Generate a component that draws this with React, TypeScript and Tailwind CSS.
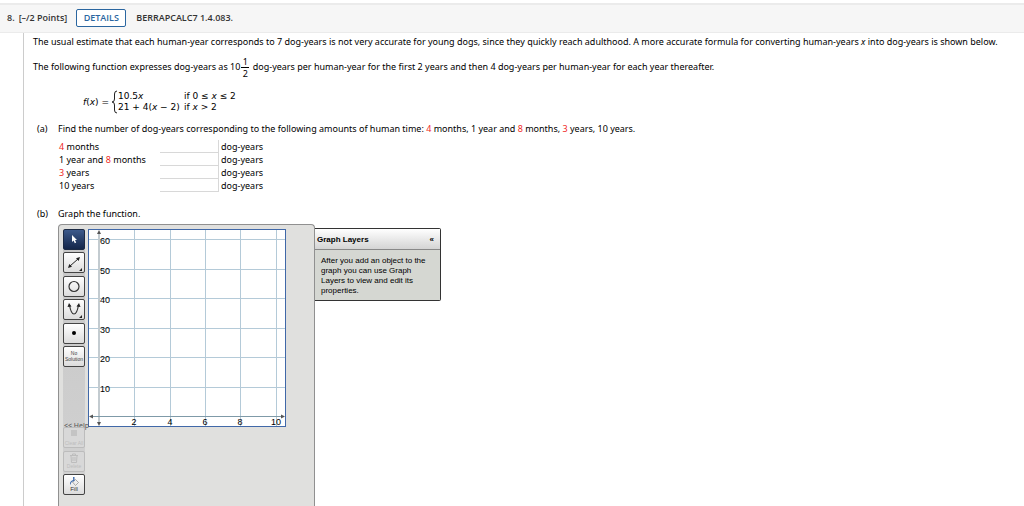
import React from 'react';

const AMOUNTS = [
  { id: 'a', label: <><Red>4</Red> months</> },
  { id: 'b', label: <>1 year and <Red>8</Red> months</> },
  { id: 'c', label: <><Red>3</Red> years</> },
  { id: 'd', label: <>10 years</> },
];

const X_TICKS = [
  { value: 2, x: 46 },
  { value: 4, x: 82 },
  { value: 6, x: 117 },
  { value: 8, x: 152 },
  { value: 10, x: 188 },
];

const Y_TICKS = [
  { value: 60, y: 11 },
  { value: 50, y: 41 },
  { value: 40, y: 70 },
  { value: 30, y: 100 },
  { value: 20, y: 129 },
  { value: 10, y: 159 },
];

function Red({ children }: { children: React.ReactNode }) {
  return <span className="text-[#f0281e]">{children}</span>;
}

function Fraction() {
  return (
    <span className="inline-flex flex-col items-center align-middle leading-[11px] mx-px">
      <span className="w-2 text-center border-b border-black">1</span>
      <span>2</span>
    </span>
  );
}

function ToolButton({ label, active, disabled, children }: {
  label: string;
  active?: boolean;
  disabled?: boolean;
  children: React.ReactNode;
}) {
  const look = active
    ? 'border-[#1c2a44] bg-linear-to-b from-[#3d5a8c] to-[#14264a]'
    : 'border-[#444] bg-linear-to-b from-white to-[#dcdcdc]';
  return (
    <button
      type="button"
      aria-label={label}
      disabled={disabled}
      className={`w-[22px] h-[21px] shrink-0 rounded-xs border flex flex-col items-center justify-center whitespace-nowrap font-['Liberation_Sans',sans-serif] ${disabled ? 'border-[#bcbcbc] bg-[#d8d8d8] text-[#bdbdbd]' : look}`}
    >
      {children}
    </button>
  );
}

function Toolbar() {
  return (
    <div className="w-[22px] flex flex-col bg-linear-to-b from-[#c6c6c6] to-[#d2d2d2]">
      <div className="h-[138px] flex flex-col justify-between">
        <ToolButton label="Select" active>
          <svg width="20" height="19" viewBox="0 0 20 19">
            <path d="M8 5v7l1.600-1.400 1.200 2.600 1.400-.6-1.200-2.500 2-.2z" fill="#fff" />
          </svg>
        </ToolButton>
        <ToolButton label="Line">
          <svg width="20" height="19" viewBox="0 0 20 19">
            <path d="M6 13L14 6" stroke="#222" />
            <path d="M4 15l1.300-4 2.700 2.800zM16 4l-4 1.200 2.700 2.900zM18 15v3h-3z" fill="#222" />
          </svg>
        </ToolButton>
        <ToolButton label="Circle">
          <svg width="20" height="19" viewBox="0 0 20 19">
            <circle cx="10" cy="9.500" r="5" fill="none" stroke="#333" strokeWidth="1.200" />
          </svg>
        </ToolButton>
        <ToolButton label="Parabola">
          <svg width="20" height="19" viewBox="0 0 20 19">
            <path d="M5.500 5C6.500 11 8 14 10 14s3.500-3 4.500-9" fill="none" stroke="#333" strokeWidth="1.200" />
            <path d="M5 3l-1.500 4 4-.5zM15 3l1.500 4-4-.5zM18 15v3h-3z" fill="#222" />
          </svg>
        </ToolButton>
        <ToolButton label="Point">
          <span className="size-1 rounded-full bg-black" />
        </ToolButton>
        <ToolButton label="No Solution">
          <span className="text-[5px] leading-[6px] text-[#444]">No<br />Solution</span>
        </ToolButton>
      </div>
      <a href="#help" className="relative z-10 mt-[54px] h-[6px] pl-px whitespace-nowrap text-[7px] leading-[10px] text-[#555]">&lt;&lt; Help</a>
      <div className="relative z-20 h-[68px] flex flex-col justify-between">
        <ToolButton label="Clear All" disabled>
          <span className="size-[6px] mb-1 bg-[#c4c4c4]" />
          <span className="text-[5px] leading-[6px]">Clear All</span>
        </ToolButton>
        <ToolButton label="Delete" disabled>
          <svg width="10" height="10" viewBox="0 0 10 10" fill="none" stroke="#bdbdbd">
            <path d="M1 2.500h8M3.500 2V1h3v1M2 3l.5 6.500h5L8 3M4 4v4M6 4v4" />
          </svg>
          <span className="text-[5px] leading-[6px]">Delete</span>
        </ToolButton>
        <ToolButton label="Fill">
          <svg width="10" height="9" viewBox="0 0 10 9">
            <path d="M3.500 5l3-2.500L9.500 5.500 6.500 8.500z" fill="#eee" stroke="#888" strokeWidth=".7" />
            <path d="M4 0h1.500v4L3 4.800C1.800 5.500 2 7 1.500 8 .5 6.500 1 4.500 3 3.500L4.200 3z" fill="#3f6cae" />
          </svg>
          <span className="text-[6px] leading-[7px] text-[#333]">Fill</span>
        </ToolButton>
      </div>
    </div>
  );
}

function Plot() {
  return (
    <svg width="198" height="198" viewBox="0 0 198 198" className="shrink-0 font-['Liberation_Sans',sans-serif] text-[9px]">
      <rect x="0.500" y="0.500" width="197" height="197" fill="#fff" stroke="#4068a8" />
      <g stroke="#b4cad8">
        {X_TICKS.map((t) => <path key={t.value} d={`M${t.x + 0.5} 1V197`} />)}
        {Y_TICKS.map((t) => <path key={t.value} d={`M1 ${t.y - 0.5}H197`} />)}
      </g>
      <path d="M11 3V195" stroke="#c3cbd0" strokeWidth="2" />
      <path d="M3 187.500H195" stroke="#7f9aa8" />
      <path d="M11 1l2 4H9zM11 197l2-4H9zM1 187.500l4-2v4zM197 187.500l-4-2v4z" fill="#555" />
      {Y_TICKS.map((t) => <text key={t.value} x="12" y={t.y + 4}>{t.value}</text>)}
      {X_TICKS.map((t) => <text key={t.value} x={t.x} y="196" textAnchor="middle">{t.value}</text>)}
    </svg>
  );
}

function GraphLayers() {
  return (
    <section className="w-[126px] mt-1 self-start border border-l-0 border-[#333] rounded-r-xs bg-[#d5d7d2] font-['Liberation_Sans',sans-serif] text-[8px]">
      <h2 className="h-[21px] pl-[2px] pr-1.5 flex items-center justify-between border-b border-[#888] bg-linear-to-b from-white to-[#d4d4d4] font-bold">
        Graph Layers
        <button type="button" aria-label="Collapse">«</button>
      </h2>
      <p className="px-1.5 pt-1.5 pb-1 leading-[10px]">
        After you add an object to the graph you can use Graph Layers to view and edit its properties.
      </p>
    </section>
  );
}

export default function App() {
  return (
    <div className="min-h-screen flex flex-col bg-white text-black font-['Noto_Sans','DejaVu_Sans',sans-serif] text-[9px] leading-[13px]">
      <header className="mt-[3px] h-[30px] px-[7px] pb-[2px] flex items-center border-t-2 border-b border-[#ebebeb] bg-[#f6f6f6] font-['Open_Sans',sans-serif] font-semibold text-[#333]">
        <span>8.</span>
        <span className="ml-1">[–/2 Points]</span>
        <button type="button" className="ml-[9px] w-[50px] h-[18px] rounded-xs border border-[#2a66a0] bg-white text-[#2a66a0]">
          DETAILS
        </button>
        <span className="ml-2.5">BERRAPCALC7 1.4.083.</span>
      </header>

      <main className="ml-[23px] flex-1 flex flex-col border-l border-[#ccc] pl-[9px] pt-[2px]">
        <p>
          The usual estimate that each human-year corresponds to 7 dog-years is not very accurate for young dogs, since they quickly reach adulthood. A more accurate formula for converting human-years <i>x</i> into dog-years is shown below.
        </p>
        <p className="mt-2">
          The following function expresses dog-years as 10<Fraction /> dog-years per human-year for the first 2 years and then 4 dog-years per human-year for each year thereafter.
        </p>

        <div className="mt-[11px] ml-[50px] flex items-center font-['DejaVu_Sans',sans-serif]">
          <span><i>f</i>(<i>x</i>) =</span>
          <svg width="7" height="24" viewBox="0 0 7 24" className="ml-[2px]" fill="none" stroke="#222">
            <path d="M6 1Q3.500 1 3.500 4V9Q3.500 12 1 12Q3.500 12 3.500 15V20Q3.500 23 6 23" />
          </svg>
          <div className="grid grid-cols-[66px_auto] leading-[11px]">
            <span>10.5<i>x</i></span>
            <span>if 0 ≤ <i>x</i> ≤ 2</span>
            <span>21 + 4(<i>x</i> − 2)</span>
            <span>if <i>x</i> &gt; 2</span>
          </div>
        </div>

        <section className="mt-2 ml-1 flex">
          <span className="w-[21px]">(a)</span>
          <div>
            <p>
              Find the number of dog-years corresponding to the following amounts of human time: <Red>4</Red> months, 1 year and <Red>8</Red> months, <Red>3</Red> years, 10 years.
            </p>
            <div className="mt-[5px] ml-px">
              {AMOUNTS.map((a) => (
                <div key={a.id} className="flex h-[13px]">
                  <label htmlFor={a.id} className="w-[101px]">{a.label}</label>
                  <input id={a.id} type="text" className="w-[59px] h-[13px] border-b border-r border-[#d8d8d8] outline-none" />
                  <span className="ml-[2px]">dog-years</span>
                </div>
              ))}
            </div>
          </div>
        </section>

        <section className="mt-[15px] ml-1 flex flex-1">
          <span className="w-[21px]">(b)</span>
          <div className="flex flex-col">
            <p>Graph the function.</p>
            <div className="mt-1 flex flex-1">
              <div className="w-[257px] flex items-start gap-[3px] pt-1 pl-1 pb-[10px] rounded-t-sm border border-b-0 border-[#909090] bg-[#e0e0de]">
                <Toolbar />
                <Plot />
              </div>
              <GraphLayers />
            </div>
          </div>
        </section>
      </main>
    </div>
  );
}
